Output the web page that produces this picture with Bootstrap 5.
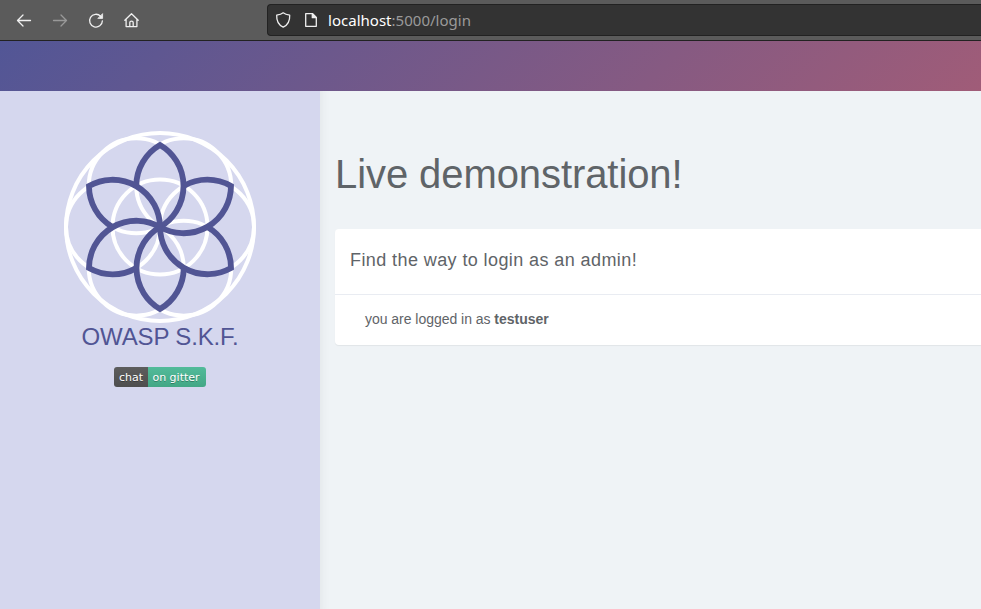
<!DOCTYPE html>
<html lang="en">
<head>
<meta charset="utf-8">
<meta name="viewport" content="width=device-width, initial-scale=1">
<title>OWASP S.K.F.</title>
<link rel="stylesheet" href="https://cdn.jsdelivr.net/npm/bootstrap@5.3.0/dist/css/bootstrap.min.css">
<style>
  body { font-family: "Liberation Sans", Arial, sans-serif; background: #eff3f6; color: #5f6468; overflow: hidden; }
  .browser-bar { height: 41px; background: #5b5b5b; border-bottom: 1px solid #222; padding-left: 15px; }
  .browser-bar svg { display: block; flex-shrink: 0; fill: none; stroke: #f0f0f0; stroke-width: 1.3; stroke-linecap: round; stroke-linejoin: round; }
  .browser-bar .icon-off { stroke: #999; }
  .browser-tools { width: 252px; gap: 18px; }
  .address { height: 32px; background: #333; border: 1px solid #222; border-right: 0; border-radius: 4px 0 0 4px; padding-left: 7px; }
  .page-icon { margin-left: 10px; }
  .url { font: 15px/30px "Noto Sans", sans-serif; color: #9a9a9a; margin-left: 9px; white-space: nowrap; letter-spacing: .02px; }
  .url span { color: #fff; }
  .top-banner { height: 50px; background: linear-gradient(135deg, #525696 0%, #a05c78 100%); }
  .side { width: 320px; background: #d5d7ee; padding-top: 40px; }
  .brand-name { font-size: 24px; line-height: 26px; color: #515594; margin: 1px 0 0; font-weight: 400; letter-spacing: -.15px; }
  .gitter { margin-top: 17px; height: 20px; border-radius: 3px; overflow: hidden; font: 11px/21px "DejaVu Sans", sans-serif; color: #fff; text-shadow: 0 1px 0 rgba(1,1,1,.3); }
  .gitter span { height: 20px; }
  .gitter span:first-child { width: 34px; background: linear-gradient(#5d5d5d, #4e4e4e); }
  .gitter span:last-child { width: 58px; padding-right: 2px; background: linear-gradient(#52bb9a, #43a785); }
  .content { padding: 60px 0 0 15px; box-shadow: inset 12px 0 12px -12px rgba(0,0,0,.07); }
  .page-title { font-size: 40px; line-height: 46px; font-weight: 400; margin: 0 0 32px; letter-spacing: -.08px; }
  .panel-box { background: #fff; border-radius: 4px 0 0 4px; box-shadow: 0 1px 1px rgba(0,0,0,.06); height: 116px; }
  .panel-head { height: 66px; padding-left: 15px; border-bottom: 1px solid #e9ecf2; font-size: 18px; line-height: 62px; letter-spacing: .41px; }
  .panel-text { padding-left: 30px; font-size: 14px; line-height: 49px; letter-spacing: -.03px; }
</style>
<script src="https://cdn.jsdelivr.net/npm/bootstrap@5.3.0/dist/js/bootstrap.bundle.min.js"></script>
</head>
<body class="vh-100 d-flex flex-column">
<header class="browser-bar d-flex align-items-center flex-shrink-0">
  <div class="browser-tools d-flex flex-shrink-0">
    <svg width="18" height="18" viewBox="0 0 18 18"><path d="M15.5 9.5H2.5M8 4L2.5 9.5L8 15"/></svg>
    <svg class="icon-off" width="18" height="18" viewBox="0 0 18 18"><path d="M2.5 9.5H15.5M10 4L15.5 9.5L10 15"/></svg>
    <svg width="18" height="18" viewBox="0 0 18 18"><path d="M13.6 5.2A6.4 6.4 0 1 0 15.4 9.8"/><path d="M15.6 3V7.4H11.2Z" fill="#f0f0f0" stroke-width=".8"/></svg>
    <svg width="18" height="18" viewBox="0 0 18 18"><path d="M1.8 9.2L8.5 2.7L15.2 9.2M3.1 8.4V15.6H13.9V8.4M6.8 15.4V11.4Q6.8 10.2 8.5 10.2Q10.2 10.2 10.2 11.4V15.4"/></svg>
  </div>
  <div class="address d-flex align-items-center flex-grow-1">
    <svg width="18" height="18" viewBox="0 0 18 18"><path d="M8.2 1.8C10.2 3.4 12.7 3.9 14.7 4.2C15 10 12.6 14 8.2 16.2C3.8 14 1.4 10 1.7 4.2C3.7 3.9 6.2 3.4 8.2 1.8Z"/></svg>
    <svg class="page-icon" width="16" height="18" viewBox="0 0 16 18"><path d="M2.7 2.7H9.6L13.3 6.4V15.3H2.7Z"/><path d="M9.3 2.7V6.7H13.3Z" fill="#f0f0f0"/></svg>
    <div class="url"><span>localhost</span>:5000/login</div>
  </div>
</header>
<div class="top-banner flex-shrink-0"></div>
<div class="d-flex flex-grow-1">
  <aside class="side d-flex flex-column align-items-center flex-shrink-0">
    <svg width="192" height="192" viewBox="-96 -96 192 192" fill="none">
      <defs>
        <path id="petal" d="M-23.75-41.14A47.5 47.5 0 0 1 0-82A47.5 47.5 0 0 1 0 0"/>
      </defs>
      <g stroke="#fff" stroke-width="4">
        <circle r="94"/><circle r="47.5"/>
        <circle cx="47" r="47"/><circle cx="-47" r="47"/>
        <circle cx="23.75" cy="-41.14" r="47.5"/><circle cx="-23.75" cy="-41.14" r="47.5"/>
        <circle cx="23.75" cy="41.14" r="47.5"/><circle cx="-23.75" cy="41.14" r="47.5"/>
      </g>
      <g stroke="#515594" stroke-width="5.8">
        <use href="#petal"/><use href="#petal" transform="rotate(60)"/><use href="#petal" transform="rotate(120)"/>
        <use href="#petal" transform="rotate(180)"/><use href="#petal" transform="rotate(240)"/><use href="#petal" transform="rotate(300)"/>
      </g>
    </svg>
    <h2 class="brand-name">OWASP S.K.F.</h2>
    <div class="gitter d-flex text-center"><span>chat</span><span>on gitter</span></div>
  </aside>
  <main class="content flex-grow-1">
    <h1 class="page-title">Live demonstration!</h1>
    <section class="panel-box">
      <div class="panel-head">Find the way to login as an admin!</div>
      <div class="panel-text">you are logged in as <strong>testuser</strong></div>
    </section>
  </main>
</div>
</body>
</html>
